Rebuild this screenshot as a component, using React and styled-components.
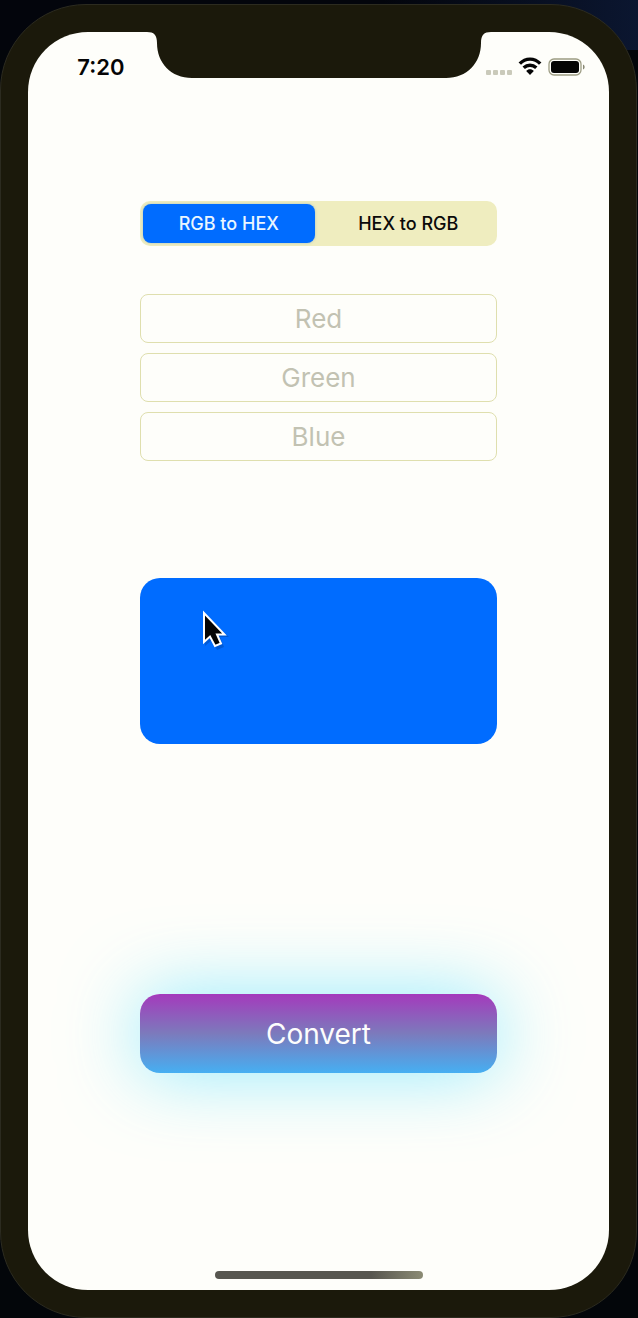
import React, { useState } from "react";
import styled, { createGlobalStyle } from "styled-components";

const GlobalStyle = createGlobalStyle`
  *, *::before, *::after { box-sizing: border-box; }
  body {
    margin: 0;
    background: linear-gradient(90deg, #03050c 60%, #0b1630 100%) top / 100% 50px no-repeat #03060a;
    font-family: Inter, "Liberation Sans", sans-serif;
  }
  button, input { font-family: inherit; }
`;

const Page = styled.main`
  min-height: 100vh;
  display: flex;
  padding: 4px 1px 0 0;
`;

const Device = styled.div`
  flex: 1;
  display: flex;
  padding: 27px;
  border: 1px solid #2c2b20;
  border-radius: 86px;
  background: #1b190b;
`;

const Screen = styled.div`
  flex: 1;
  display: flex;
  flex-direction: column;
  border-radius: 60px;
  background: #fefefa;
  overflow: hidden;
`;

const StatusBar = styled.header`
  display: grid;
  grid-template-columns: minmax(0, 1fr) 344px minmax(0, 1fr);
  height: 46px;
`;

const Time = styled.time`
  align-self: end;
  justify-self: end;
  padding-right: 22px;
  font-size: 22px;
  line-height: 22px;
  font-weight: 600;
  color: #050505;
`;

const Indicators = styled.div`
  display: flex;
  align-items: center;
  align-self: end;
  justify-content: flex-end;
  gap: 6px;
  height: 22px;
  padding-right: 24px;
  svg { flex-shrink: 0; }
`;

const Content = styled.div`
  display: flex;
  flex-direction: column;
  padding: 123px 112px 48px;
`;

const Segments = styled.div`
  display: grid;
  grid-template-columns: 1fr 1fr;
  gap: 8px;
  height: 45px;
  padding: 3px;
  border-radius: 10px;
  background: #efedbf;
`;

const Segment = styled.button`
  border: 0;
  padding: 0;
  border-radius: 8px;
  font-size: 18px;
  font-weight: 500;
  color: ${(p) => (p.$active ? "#e9f6ff" : "#0a0a0a")};
  background: ${(p) => (p.$active ? "#006cff" : "transparent")};
  box-shadow: ${(p) => (p.$active ? "0 0 3px #a9c4c4" : "none")};
`;

const Fields = styled.form`
  display: flex;
  flex-direction: column;
  gap: 10px;
  margin-top: 48px;
`;

const Field = styled.input`
  width: 100%;
  height: 49px;
  padding: 0 12px;
  border: 1px solid #dfdfae;
  border-radius: 8px;
  background: transparent;
  text-align: center;
  font-size: 26px;
  color: #0a0a0a;
  outline: none;
  &::placeholder { color: #c2c2b2; opacity: 1; }
`;

const Preview = styled.div`
  position: relative;
  height: 166px;
  margin-top: 117px;
  border-radius: 20px;
  background: #006cff;
`;

const Pointer = styled.svg`
  position: absolute;
  left: 60px;
  top: 30px;
`;

const Convert = styled.button`
  height: 79px;
  margin-top: 250px;
  padding: 0;
  border: 0;
  border-radius: 20px;
  font-size: 28px;
  color: #fdfdfd;
  background: linear-gradient(#a43abc, #7c7abc 50%, #46aff2);
  box-shadow: 0 0 76px rgba(90, 225, 255, 0.65);
`;

const HomeIndicator = styled.div`
  align-self: center;
  width: 208px;
  height: 8px;
  margin: auto 0 11px;
  border-radius: 4px;
  background: linear-gradient(90deg, #57564f 75%, #8b8b74 100%);
`;

const Notch = () => (
  <svg width="344" height="46" viewBox="0 0 344 46" aria-hidden="true">
    <path
      d="M0 0C7 0 10 3 10 11C10 31 24 46 45 46H299C320 46 334 31 334 11C334 3 337 0 344 0Z"
      fill="#1b190b"
    />
  </svg>
);

const SignalIcon = () => (
  <svg width="27" height="22" viewBox="0 0 27 22" aria-label="No signal">
    {[1, 8, 15, 22].map((x) => (
      <rect key={x} x={x} y="14" width="5" height="5" rx="1" fill="#cacaba" />
    ))}
  </svg>
);

const WifiIcon = () => (
  <svg width="24" height="22" viewBox="0 0 24 22" aria-label="Wi-Fi">
    <g fill="none" stroke="#050505" strokeWidth="3.4">
      <path d="M1.8 7.7C7.5 1.6 16.5 1.6 22.2 7.7" />
      <path d="M5.7 11.8C9.4 8.3 14.6 8.3 18.3 11.8" />
    </g>
    <path d="M8.2 15C10.2 12.8 13.8 12.8 15.8 15L12 19Z" fill="#050505" />
  </svg>
);

const BatteryIcon = () => (
  <svg width="37" height="22" viewBox="0 0 37 22" aria-label="Battery full">
    <rect x="1" y="3" width="32" height="16" rx="5" fill="none" stroke="#9c9c83" strokeWidth="1.3" />
    <rect x="3" y="5" width="28" height="12" rx="3" fill="#050505" />
    <path d="M35 8.5C37.2 9.4 37.2 12.6 35 13.5Z" fill="#8a8a75" />
  </svg>
);

const channels = ["Red", "Green", "Blue"];
const modes = ["RGB to HEX", "HEX to RGB"];

export default function App() {
  const [mode, setMode] = useState(modes[0]);
  return (
    <>
      <GlobalStyle />
      <Page>
        <Device>
          <Screen>
            <StatusBar>
              <Time>7:20</Time>
              <Notch />
              <Indicators>
                <SignalIcon />
                <WifiIcon />
                <BatteryIcon />
              </Indicators>
            </StatusBar>
            <Content>
              <Segments role="group" aria-label="Conversion">
                {modes.map((m) => (
                  <Segment
                    key={m}
                    type="button"
                    $active={m === mode}
                    aria-pressed={m === mode}
                    onClick={() => setMode(m)}
                  >
                    {m}
                  </Segment>
                ))}
              </Segments>
              <Fields id="channels" onSubmit={(e) => e.preventDefault()}>
                {channels.map((c) => (
                  <Field key={c} name={c} aria-label={c} placeholder={c} inputMode="numeric" />
                ))}
              </Fields>
              <Preview>
                <Pointer width="32" height="44" viewBox="0 0 32 44" aria-hidden="true">
                  <path d="M5 7V38L12 32L17 42L24 39L20 29H29Z" fill="#00398a" opacity="0.35" />
                  <path
                    d="M4 5V34L10 28.5L15 38L21 35.5L17 26.5H24.5Z"
                    fill="#050505"
                    stroke="#ffffff"
                    strokeWidth="2"
                  />
                </Pointer>
              </Preview>
              <Convert type="submit" form="channels">Convert</Convert>
            </Content>
            <HomeIndicator />
          </Screen>
        </Device>
      </Page>
    </>
  );
}
